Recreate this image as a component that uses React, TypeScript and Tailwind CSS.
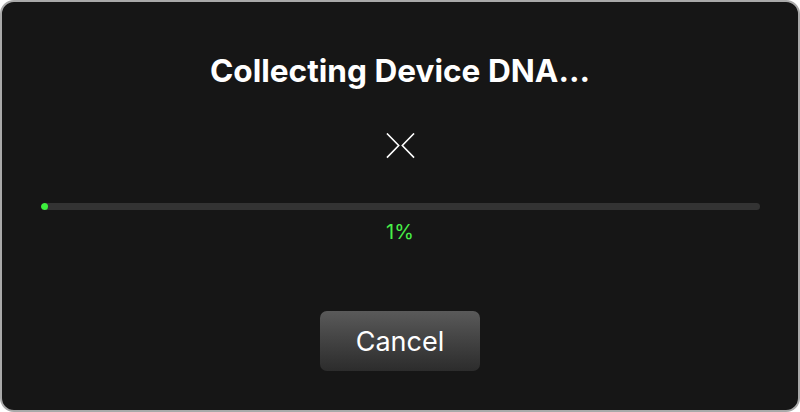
import React from "react";

export default function App() {
  const progress = 1;
  return (
    <div className="w-[800px] h-[412px] bg-[#161616] border-2 border-[#a9a9a9] rounded-[14px] flex flex-col items-center" style={{ fontFamily: "Inter, 'Noto Sans', sans-serif" }}>
      <h1 className="mt-[51px] text-[31.6px] leading-[36px] font-bold text-white">
        Collecting Device DNA...
      </h1>
      <svg className="mt-[44px]" width="29" height="26" viewBox="0 0 29 26" fill="none" stroke="white" strokeWidth="1.6" strokeLinecap="square" strokeLinejoin="miter">
        <polyline points="1.5,1 12.7,12.5 1.5,24" />
        <polyline points="27.5,1 16.3,12.5 27.5,24" />
      </svg>
      <div className="self-stretch mt-[44px] pl-[39px] pr-[38px]">
        <div className="h-[7px] rounded-full bg-[#333333] overflow-hidden">
          <div className="h-full rounded-full bg-[#3cf03c] min-w-[7px]" style={{ width: `${progress}%` }} />
        </div>
      </div>
      <div className="mt-[10px] text-[20px] leading-[24px] text-[#48f048]">1%</div>
      <button className="mt-[67px] w-[160px] h-[60px] rounded-[7px] bg-gradient-to-b from-[#5a5a5a] to-[#2c2c2c] text-white text-[27px] leading-none">
        Cancel
      </button>
    </div>
  );
}
